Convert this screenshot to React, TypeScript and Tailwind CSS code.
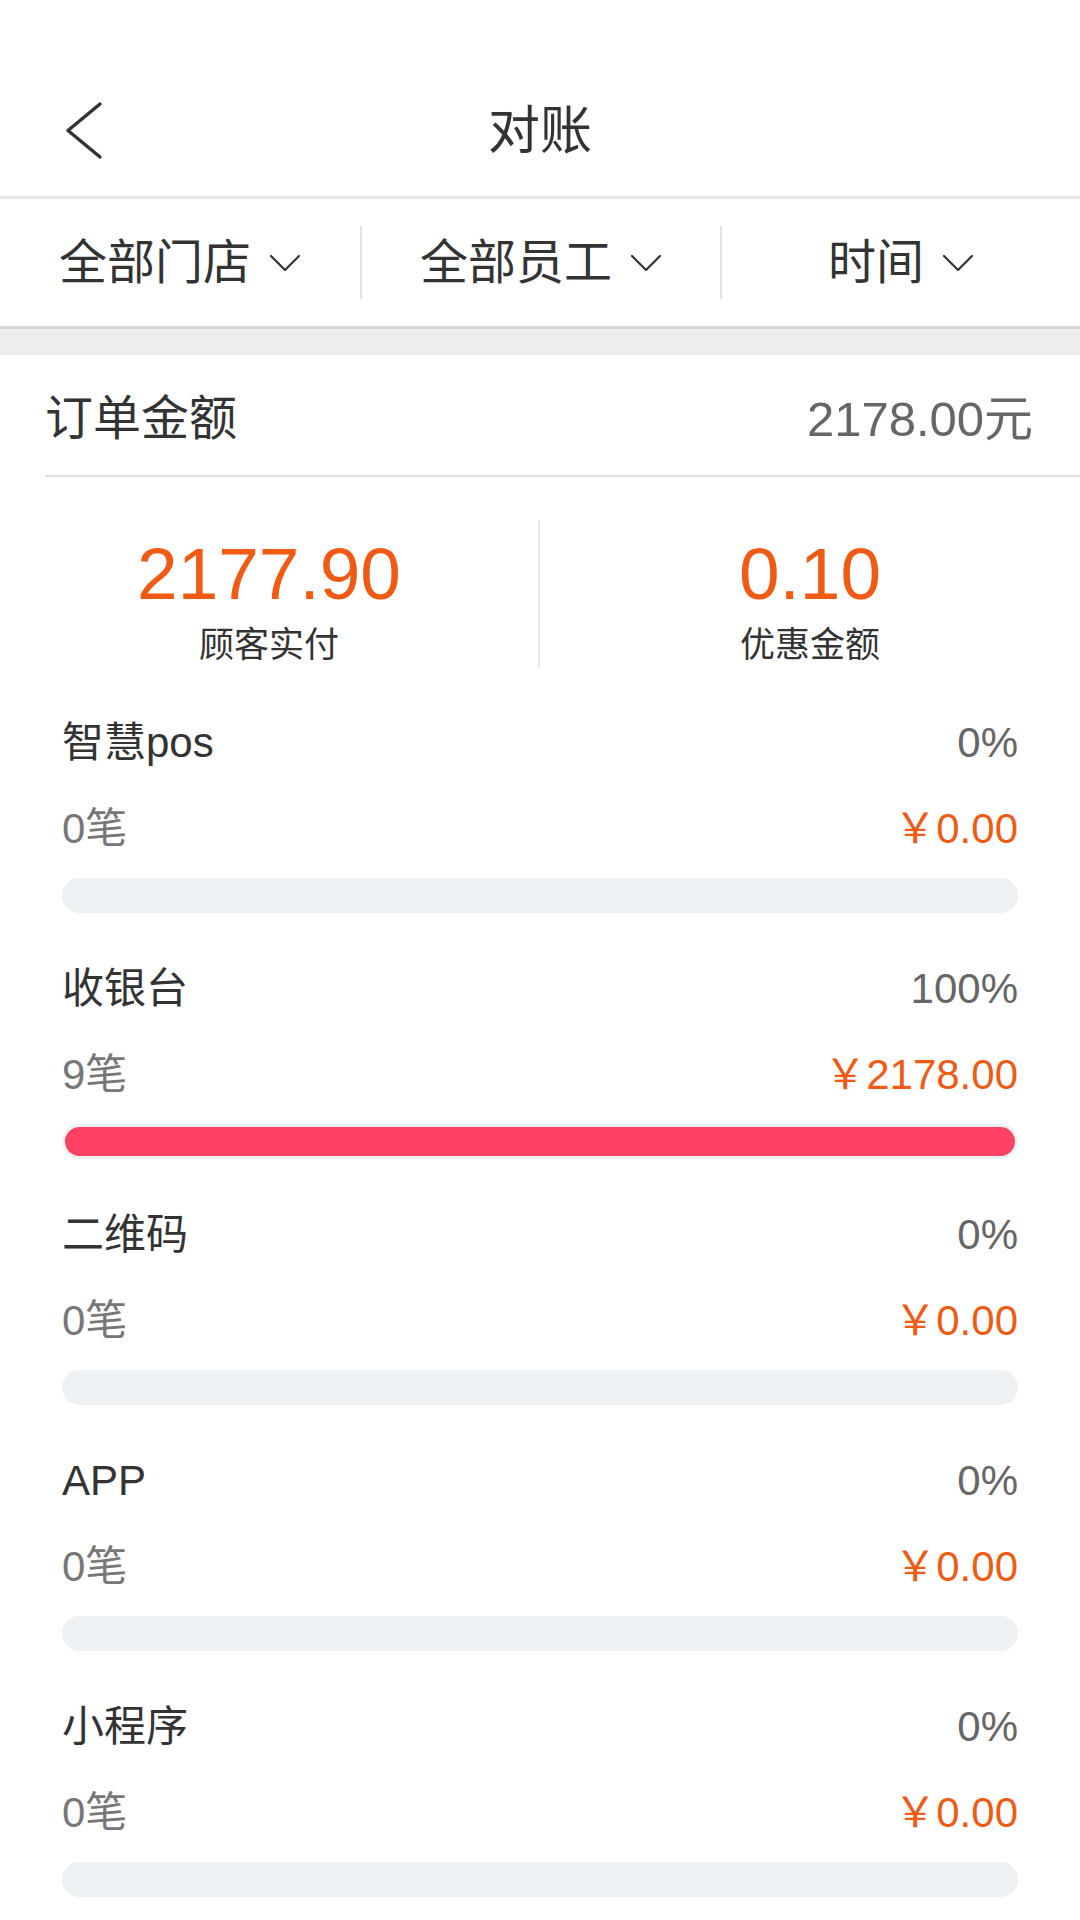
import React from "react";

interface Channel {
  name: string;
  count: number;
  amount: string;
  percent: number;
}

const channels: Channel[] = [
  { name: "智慧pos", count: 0, amount: "0.00", percent: 0 },
  { name: "收银台", count: 9, amount: "2178.00", percent: 100 },
  { name: "二维码", count: 0, amount: "0.00", percent: 0 },
  { name: "APP", count: 0, amount: "0.00", percent: 0 },
  { name: "小程序", count: 0, amount: "0.00", percent: 0 },
];

const filters = ["全部门店", "全部员工", "时间"];

const ChevronDown = () => (
  <svg width="32" height="20" viewBox="0 0 32 20" fill="none" className="ml-[18px] shrink-0">
    <polyline points="2,3 16,17 30,3" stroke="#333" strokeWidth="2.2" strokeLinecap="round" strokeLinejoin="round" />
  </svg>
);

const App = () => {
  return (
    <div className="w-[1080px] h-[1920px] overflow-hidden bg-white font-['Liberation_Sans','Noto_Sans_CJK_SC',sans-serif] text-[#333]">
      {/* status bar space */}
      <div className="h-[65px]" />

      {/* Nav bar */}
      <div className="relative h-[134px] flex items-center justify-center border-b-[3px] border-[#e8e8e8]">
        <div className="absolute left-[64px] top-1/2 -translate-y-1/2">
          <svg width="40" height="60" viewBox="0 0 40 60" fill="none">
            <polyline points="36,3 4,29.5 36,56" stroke="#333" strokeWidth="3.5" strokeLinecap="round" strokeLinejoin="round" />
          </svg>
        </div>
        <span className="text-[52px] leading-none">对账</span>
      </div>

      {/* Filter bar */}
      <div className="h-[130px] grid grid-cols-3 items-center border-b-[3px] border-[#d6d6d6]">
        {filters.map((f, i) => (
          <div
            key={f}
            className={`flex items-center justify-center h-[73px] ${i > 0 ? "border-l-2 border-[#e2e2e2]" : ""}`}
          >
            <span className="text-[48px] leading-none">{f}</span>
            <ChevronDown />
          </div>
        ))}
      </div>
      <div className="h-[26px] bg-[#ededed]" />

      {/* Order total */}
      <div className="ml-[45px] h-[122px] pt-[8px] pr-[47px] flex items-center justify-between border-b-2 border-[#e0e0e0]">
        <span className="text-[48px] leading-none">订单金额</span>
        <span className="text-[49px] leading-none text-[#666]">2178.00元</span>
      </div>

      {/* Stats */}
      <div className="pt-[43px] grid grid-cols-2">
        <div className="h-[147px] flex flex-col items-center pt-[14px] border-r-2 border-[#e8e8e8]">
          <span className="text-[73px] leading-[80px] text-[#f15a13]">2177.90</span>
          <span className="mt-[11px] text-[35px] leading-[40px]">顾客实付</span>
        </div>
        <div className="h-[147px] flex flex-col items-center pt-[14px]">
          <span className="text-[73px] leading-[80px] text-[#f15a13]">0.10</span>
          <span className="mt-[11px] text-[35px] leading-[40px]">优惠金额</span>
        </div>
      </div>

      {/* Channels */}
      <div className="pt-[52px] px-[62px]">
        {channels.map((c) => (
          <div key={c.name} className="pb-[52px]">
            <div className="h-[48px] flex items-center justify-between">
              <span className="text-[42px] leading-none">{c.name}</span>
              <span className="text-[42px] leading-none text-[#666]">{c.percent}%</span>
            </div>
            <div className="mt-[38px] h-[48px] flex items-center justify-between">
              <span className="text-[42px] leading-none text-[#777]">{c.count}笔</span>
              <span className="text-[42px] leading-none text-[#f15a13]">￥{c.amount}</span>
            </div>
            <div className="mt-[25px] h-[35px] rounded-full bg-[#eef1f3] p-[3px]">
              {c.percent > 0 && (
                <div className="h-full rounded-full bg-[#ff4264]" style={{ width: `${c.percent}%` }} />
              )}
            </div>
          </div>
        ))}
      </div>
    </div>
  );
};

export default App;
